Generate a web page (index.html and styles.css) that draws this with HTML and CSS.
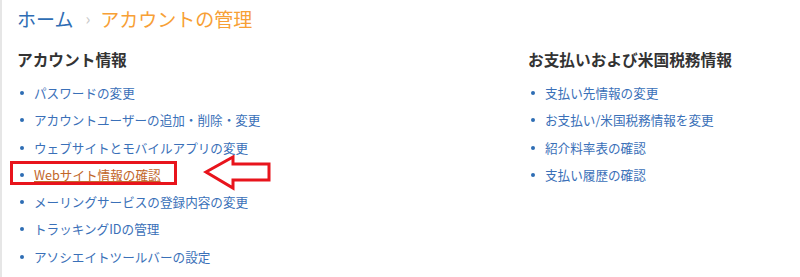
FILE: index.html
```html
<!DOCTYPE html>
<html>
<head>
    <title>アカウントの管理</title>
    <link rel="stylesheet" href="styles.css">
</head>
<body>
    <div class="page">
        <div class="crumbs">
            <a href="#" class="crumb-home">ホーム</a>
            <span class="crumb-sep">›</span>
            <span class="crumb-current">アカウントの管理</span>
        </div>

        <div class="columns">
            <div class="col col-left">
                <h2 class="col-title">アカウント情報</h2>
                <ul class="links">
                    <li><a href="#">パスワードの変更</a></li>
                    <li><a href="#">アカウントユーザーの追加・削除・変更</a></li>
                    <li><a href="#">ウェブサイトとモバイルアプリの変更</a></li>
                    <li class="marked">
                        <a href="#" class="visited">Webサイト情報の確認</a>
                        <span class="mark-box"></span>
                        <svg class="mark-arrow" width="72" height="36" viewBox="0 0 72 36">
                            <polygon points="3,17 30,2 30,9 66,9 66,25 30,25 30,33" fill="#fff" stroke="#e8141c" stroke-width="3" stroke-linejoin="miter"/>
                        </svg>
                    </li>
                    <li><a href="#">メーリングサービスの登録内容の変更</a></li>
                    <li><a href="#">トラッキングIDの管理</a></li>
                    <li><a href="#">アソシエイトツールバーの設定</a></li>
                </ul>
            </div>
            <div class="col col-right">
                <h2 class="col-title">お支払いおよび米国税務情報</h2>
                <ul class="links">
                    <li><a href="#">支払い先情報の変更</a></li>
                    <li><a href="#">お支払い/米国税務情報を変更</a></li>
                    <li><a href="#">紹介料率表の確認</a></li>
                    <li><a href="#">支払い履歴の確認</a></li>
                </ul>
            </div>
        </div>
    </div>
</body>
</html>
```

FILE: styles.css
```css
body {
    margin: 0;
    background-color: #fff;
    font-family: "Noto Sans CJK JP", "Noto Sans", sans-serif;
    color: #333;
}
.page {
    border-left: 2px solid #e6e6e6;
    min-height: 277px;
    padding-left: 15px;
    box-sizing: border-box;
}
.crumbs {
    display: flex;
    align-items: center;
    height: 36px;
    font-size: 19px;
    padding-top: 0;
}
.crumb-home {
    color: #2e6db4;
    text-decoration: none;
}
.crumb-sep {
    color: #c8c8c8;
    font-size: 16px;
    margin: 0 10px 0 12px;
}
.crumb-current {
    color: #f7a035;
}
.columns {
    display: flex;
}
.col-left {
    width: 511px;
}
.col-title {
    font-size: 15.7px;
    font-weight: bold;
    color: #333;
    margin: 13px 0 8px 0;
    line-height: 22px;
}
.links {
    list-style: none;
    margin: 0;
    padding: 0;
}
.links li {
    position: relative;
    padding-left: 17px;
    height: 27.3px;
    line-height: 27px;
    font-size: 12.6px;
}
.links li::before {
    content: "";
    position: absolute;
    left: 3px;
    top: 12px;
    width: 4px;
    height: 4px;
    border-radius: 50%;
    background-color: #2e6db4;
}
.links a {
    color: #3a70b8;
    text-decoration: none;
}
.links a.visited {
    color: #c2662a;
    text-decoration: underline;
}
.mark-box {
    position: absolute;
    left: -7px;
    top: 0;
    width: 161px;
    height: 18px;
    border: 3px solid #e8141c;
}
.mark-arrow {
    position: absolute;
    left: 186px;
    top: -6px;
}
```
